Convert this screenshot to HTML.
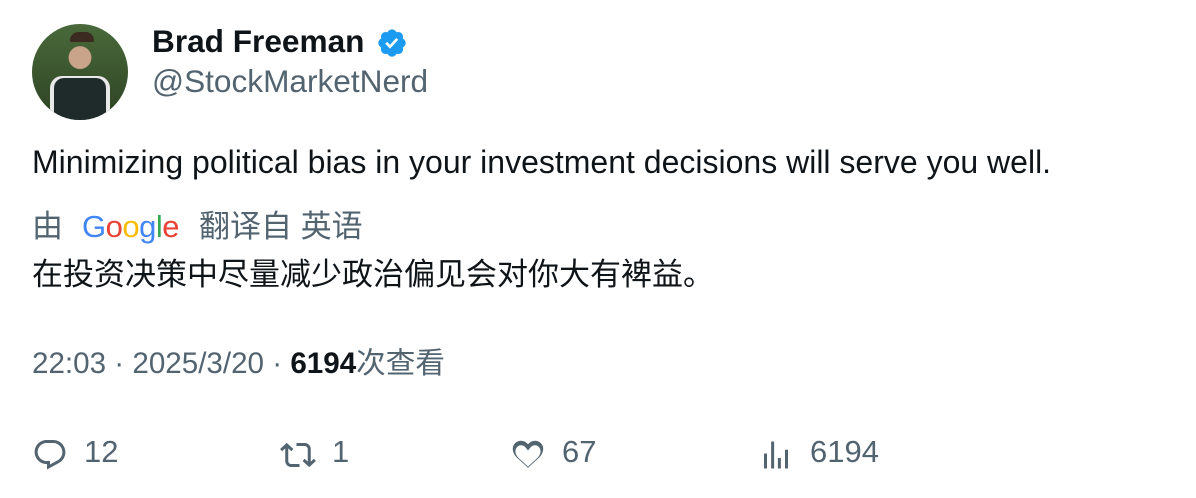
<html><head><style>
body{margin:0;width:1196px;height:498px;background:#fff;font-family:"Liberation Sans","Noto Sans CJK SC",sans-serif;color:#0f1419;position:relative;overflow:hidden}
.a{position:absolute;white-space:nowrap}
.g{color:#536471}
</style></head><body>
<div class="a" style="left:32px;top:24px;width:96px;height:96px;border-radius:50%;overflow:hidden;background:radial-gradient(circle at 50% 35%,#c9a38a 0 14%,transparent 15%),linear-gradient(#4a6a3a,#2d4224)">
<div style="position:absolute;left:18px;top:52px;width:60px;height:50px;background:#e8e8e8;border-radius:12px 12px 0 0"></div>
<div style="position:absolute;left:22px;top:54px;width:52px;height:50px;background:#1f2a2a;border-radius:10px 10px 0 0"></div>
<div style="position:absolute;left:38px;top:8px;width:24px;height:10px;background:#3a2a20;border-radius:10px 10px 2px 2px"></div>
</div>
<div class="a" style="left:152px;top:22px;font-size:31.6px;font-weight:bold;line-height:38px">Brad Freeman</div>
<svg class="a" style="left:376px;top:27px" width="32" height="32" viewBox="0 0 24 24"><path fill="#1d9bf0" d="M22.25 12c0-1.43-.88-2.67-2.19-3.34.46-1.39.2-2.9-.81-3.910s-2.52-1.270-3.910-.81c-.66-1.31-1.910-2.19-3.340-2.19s-2.67.88-3.33 2.19c-1.4-.46-2.910-.2-3.920.81s-1.26 2.52-.8 3.91C2.63 9.33 1.75 10.57 1.75 12s.88 2.67 2.2 3.34c-.46 1.39-.21 2.9.8 3.91s2.52 1.26 3.91.81c.67 1.31 1.91 2.19 3.34 2.19s2.68-.88 3.34-2.19c1.39.45 2.9.2 3.91-.81s1.27-2.52.81-3.91c1.31-.67 2.19-1.91 2.19-3.34z"/><path fill="#fff" d="M10.54 16.2l-3.64-3.64 1.4-1.42 2.2 2.2 4.7-5.13 1.48 1.36z"/></svg>
<div class="a g" style="left:152px;top:62px;font-size:31.6px;line-height:38px">@StockMarketNerd</div>
<div class="a" style="left:32px;top:143px;font-size:32px;line-height:38px">Minimizing political bias in your investment decisions will serve you well.</div>
<div class="a g" style="left:32px;top:208px;font-size:31px;line-height:38px">由<span style="font-family:'Liberation Sans',sans-serif;font-size:31px;letter-spacing:-0.5px;margin:0 20px 0 19px"><span style="color:#4285f4">G</span><span style="color:#ea4335">o</span><span style="color:#fbbc05">o</span><span style="color:#4285f4">g</span><span style="color:#34a853">l</span><span style="color:#ea4335">e</span></span>翻译自 英语</div>
<div class="a" style="left:32px;top:256px;font-size:31px;line-height:38px">在投资决策中尽量减少政治偏见会对你大有裨益。</div>
<div class="a g" style="left:32px;top:345px;font-size:29.6px;line-height:38px">22:03 · 2025/3/20 · <b style="color:#0f1419">6194</b>次查看</div>
<svg class="a" style="left:32px;top:437px" width="36" height="36" viewBox="0 0 24 24"><path fill="#536471" d="M1.75 10c0-4.42 3.58-8 8.01-8h4.36c4.49 0 8.13 3.64 8.13 8.13 0 2.96-1.6 5.68-4.19 7.11l-8.06 4.46v-3.690h-.07c-4.49.1-8.18-3.51-8.18-8.01zm8.01-6c-3.32 0-6.01 2.69-6.01 6.01 0 3.37 2.77 6.08 6.15 6.01l.35-.01h1.75v2.3l5.1-2.82c1.95-1.07 3.15-3.11 3.15-5.33 0-3.39-2.74-6.13-6.13-6.13H9.76z"/></svg>
<div class="a g" style="left:84px;top:433px;font-size:31px;line-height:38px">12</div>
<svg class="a" style="left:280px;top:437px" width="36" height="36" viewBox="0 0 24 24"><path fill="#536471" d="M4.5 3.88l4.43 4.14-1.36 1.46L5.5 7.55V16c0 1.1.9 2 2 2H13v2H7.5c-2.21 0-4-1.79-4-4V7.55L1.43 9.48.07 8.02 4.5 3.88zM16.5 6H11V4h5.5c2.21 0 4 1.790 4 4v8.45l2.07-1.93 1.36 1.46-4.43 4.14-4.43-4.14 1.36-1.46 2.07 1.93V8c0-1.1-.9-2-2-2z"/></svg>
<div class="a g" style="left:332px;top:433px;font-size:31px;line-height:38px">1</div>
<svg class="a" style="left:510px;top:437px" width="36" height="36" viewBox="0 0 24 24"><path fill="#536471" d="M16.7 5.5c-1.11-.03-2.37.49-3.47 1.94l-1.23 1.6-1.22-1.61C9.68 5.98 8.4 5.47 7.3 5.5c-1.12.04-2.12.6-2.78 1.38-1.37 1.64-1.41 4.5 1.5 7.4L12 19.75l5.97-5.47c2.92-2.91 2.87-5.77 1.5-7.4-.65-.78-1.64-1.34-2.77-1.38zM12 20.5l-7.38-6.75c-3.32-3.35-3.4-7.060-1.58-9.24C4.04 3.31 5.64 2.54 7.24 2.5c1.72-.05 3.38.75 4.76 2.36 1.38-1.61 3.04-2.41 4.76-2.36 1.6.04 3.2.81 4.2 2.01 1.82 2.18 1.74 5.89-1.58 9.24z"/></svg>
<div class="a g" style="left:562px;top:433px;font-size:31px;line-height:38px">67</div>
<svg class="a" style="left:758px;top:437px" width="36" height="36" viewBox="0 0 24 24"><path fill="#536471" d="M8.75 21V3h2v18h-2zM18 21V8.5h2V21h-2zM4 21l.004-10h2L6 21H4zm9.248 0v-7h2v7h-2z"/></svg>
<div class="a g" style="left:810px;top:433px;font-size:31px;line-height:38px">6194</div>
</body></html>
